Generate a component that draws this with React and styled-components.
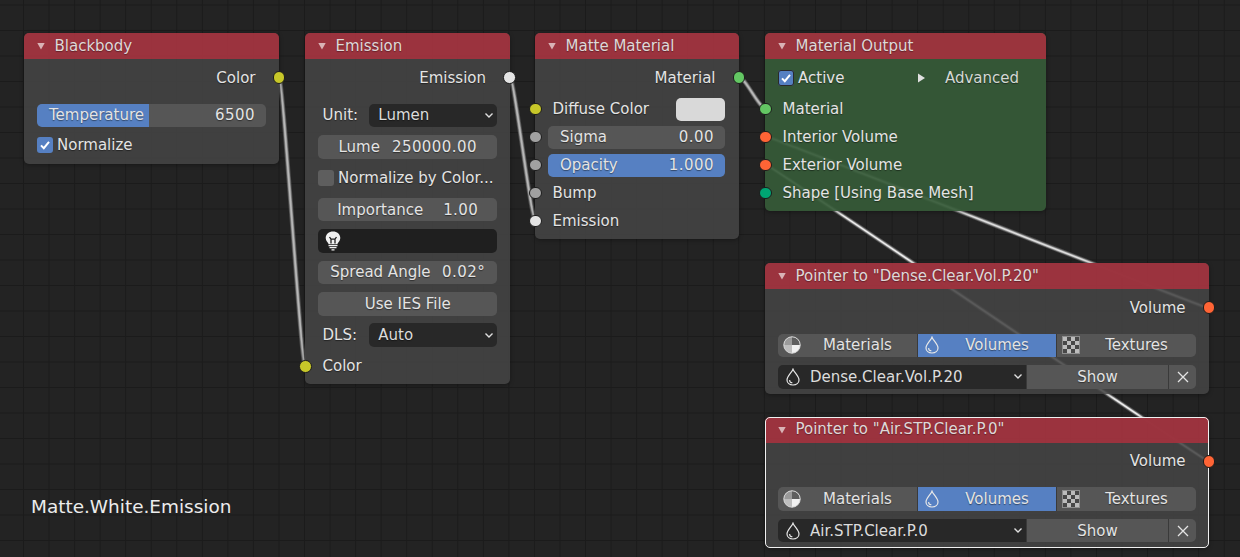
import React from 'react';
import styled, { createGlobalStyle } from 'styled-components';

const GlobalStyle = createGlobalStyle`
  html, body {
    margin: 0;
    padding: 0;
    background: #232323;
  }
  body {
    font-family: "DejaVu Sans", sans-serif;
  }
`;

const Canvas = styled.div`
  position: relative;
  width: 1240px;
  height: 557px;
  overflow: hidden;
  background-color: #232323;
  background-image:
    linear-gradient(to right, #1b1b1b 1px, transparent 1px),
    linear-gradient(to bottom, #1b1b1b 1px, transparent 1px);
  background-size: 25.56px 25.5px;
  background-position: 23px 4.5px;
`;

const Wires = styled.svg`
  position: absolute;
  left: 0;
  top: 0;
`;

const Caption = styled.div`
  position: absolute;
  left: 31px;
  top: 495px;
  font-size: 18.45px;
  line-height: 23px;
  color: #ececec;
`;

const Node = styled.section`
  position: absolute;
  left: ${(p) => p.$x}px;
  top: ${(p) => p.$y}px;
  width: ${(p) => p.$w}px;
  box-sizing: border-box;
  border-radius: 5px;
  background: ${(p) => (p.$output ? 'rgba(54, 90, 56, 0.93)' : 'rgba(68, 68, 68, 0.88)')};
  box-shadow: 0 1px 4px rgba(0, 0, 0, 0.35);
  outline: ${(p) => (p.$selected ? '1px solid #f0f0f0' : 'none')};
  outline-offset: -1px;
  color: #e4e4e4;
  font-size: 15px;
`;

const Header = styled.header`
  display: flex;
  align-items: center;
  height: 25.7px;
  padding-left: 12.5px;
  gap: 10px;
  border-radius: 5px 5px 0 0;
  background: rgba(160, 50, 62, 0.94);
  color: #dfd8d8;
  line-height: 1;
  white-space: nowrap;
  text-shadow: 0 1px 1px rgba(0, 0, 0, 0.35);
`;

const Body = styled.div`
  display: flex;
  flex-direction: column;
  gap: ${(p) => p.$gap}px;
  padding: 7px 13px ${(p) => p.$bottom ?? 6}px;
`;

const Row = styled.div`
  position: relative;
  display: flex;
  align-items: center;
  justify-content: ${(p) => (p.$right ? 'flex-end' : 'flex-start')};
  height: 23.6px;
  margin-bottom: ${(p) => p.$after ?? 0}px;
  padding: ${(p) => (p.$right ? '0 10.5px 0 0' : '0 0 0 4.5px')};
  white-space: nowrap;
  text-shadow: 0 1px 1px rgba(0, 0, 0, 0.45);
`;

const Socket = styled.span`
  position: absolute;
  top: 50%;
  ${(p) => (p.$right ? 'right: -19.3px' : 'left: -19px')};
  width: 10.5px;
  height: 10.5px;
  margin-top: -6.4px;
  border-radius: 50%;
  border: 0.8px solid #1c1c1c;
  background: ${(p) => p.$color};
`;

const Field = styled.div`
  display: flex;
  align-items: center;
  justify-content: ${(p) => (p.$center ? 'center' : 'space-between')};
  gap: ${(p) => p.$gap ?? 0}px;
  height: 23.6px;
  padding: 0 11px 0 12px;
  box-sizing: border-box;
  border-radius: 5px;
  background: ${(p) => (p.$active ? '#5680c2' : '#565656')};
  color: #e4e4e4;
  white-space: nowrap;
  text-shadow: 0 1px 1px rgba(0, 0, 0, 0.45);
`;

const Slider = styled(Field)`
  background: linear-gradient(to right, #5680c2 ${(p) => p.$fill}%, #565656 ${(p) => p.$fill}%);
`;

const Value = styled.span`
  letter-spacing: 0.45px;
`;

const CheckRow = styled.label`
  display: flex;
  align-items: center;
  gap: 4px;
  height: 23.6px;
  margin-top: ${(p) => p.$top ?? 0}px;
  margin-bottom: ${(p) => p.$after ?? 0}px;
  white-space: nowrap;
  text-shadow: 0 1px 1px rgba(0, 0, 0, 0.45);
`;

const Box = styled.span`
  display: flex;
  align-items: center;
  justify-content: center;
  flex: none;
  width: 16px;
  height: 16px;
  border-radius: 3px;
  background: ${(p) => (p.$on ? '#5680c2' : '#5e5e5e')};
  box-shadow: ${(p) => (p.$ring ? 'inset 0 0 0 1px #2a2a2a' : 'none')};
`;

const Advanced = styled.div`
  display: flex;
  align-items: center;
  margin-left: auto;
  padding-right: 14px;
  gap: 20px;
  color: #d4d8d4;
`;

const LabeledRow = styled.div`
  display: grid;
  grid-template-columns: 46.8px 1fr;
  align-items: center;
  padding-left: 4.5px;
  text-shadow: 0 1px 1px rgba(0, 0, 0, 0.45);
`;

const Dropdown = styled.div`
  display: flex;
  align-items: center;
  justify-content: space-between;
  height: 23.6px;
  padding: 0 3px 0 9px;
  box-sizing: border-box;
  border-radius: 5px;
  background: #282828;
  color: #dcdcdc;
  white-space: nowrap;
`;

const BulbField = styled.div`
  display: flex;
  align-items: center;
  height: 23.6px;
  padding-left: 7px;
  box-sizing: border-box;
  border-radius: 5px;
  background: #1f1f1f;
`;

const SwatchRow = styled.div`
  position: relative;
  display: flex;
  align-items: center;
  justify-content: space-between;
  height: 23.6px;
  margin-right: 1px;
  padding-left: 4.5px;
  text-shadow: 0 1px 1px rgba(0, 0, 0, 0.45);
`;

const Swatch = styled.span`
  width: 49px;
  height: 23.6px;
  border-radius: 5px;
  background: #d9d9d9;
`;

const FieldRow = styled.div`
  position: relative;
  margin-right: 1px;
`;

const Tabs = styled.div`
  display: grid;
  grid-template-columns: 139px 139px 140px;
  height: 23.6px;
  margin: 14px 0 8px;
`;

const Tab = styled.div`
  position: relative;
  display: flex;
  align-items: center;
  justify-content: center;
  padding-left: 20px;
  background: ${(p) => (p.$active ? '#5680c2' : '#565656')};
  border-left: ${(p) => (p.$first ? '0' : '1px solid #3a3a3a')};
  border-radius: ${(p) => p.$radius};
  color: #e4e4e4;
  text-shadow: 0 1px 1px rgba(0, 0, 0, 0.45);
`;

const TabIcon = styled.span`
  position: absolute;
  left: ${(p) => p.$left ?? 5}px;
  top: 50%;
  transform: translateY(-50%);
  display: flex;
`;

const PickerRow = styled.div`
  display: grid;
  grid-template-columns: 248px 142px 28px;
  height: 23.6px;
`;

const Picker = styled.div`
  display: flex;
  align-items: center;
  gap: 10px;
  padding-left: 8px;
  padding-right: 3px;
  border-radius: 5px 0 0 5px;
  background: #282828;
  color: #dcdcdc;
  white-space: nowrap;
`;

const PickerName = styled.span`
  flex: 1;
`;

const ShowButton = styled.div`
  display: flex;
  align-items: center;
  justify-content: center;
  background: #565656;
  border-left: 1px solid #3a3a3a;
  color: #e4e4e4;
  text-shadow: 0 1px 1px rgba(0, 0, 0, 0.45);
`;

const CloseButton = styled(ShowButton)`
  border-radius: 0 5px 5px 0;
`;

const SOCKET = {
  yellow: '#c7c729',
  white: '#e4e4e4',
  green: '#63c763',
  grey: '#a1a1a1',
  orange: '#ff6435',
  teal: '#00a673',
};

const Arrow = () => (
  <svg width="8" height="8" viewBox="0 0 8 8">
    <path d="M0.3 1 H7.7 L4 7.6 Z" fill="#d9b3b6" />
  </svg>
);

const Check = () => (
  <svg width="12" height="12" viewBox="0 0 12 12">
    <path d="M2 6.4 L4.8 9.2 L10 2.8" fill="none" stroke="#fff" strokeWidth="2" />
  </svg>
);

const Chevron = () => (
  <svg width="10" height="7" viewBox="0 0 10 7">
    <path d="M1.5 1.5 L5 5 L8.5 1.5" fill="none" stroke="#e0e0e0" strokeWidth="1.4" />
  </svg>
);

const Drop = () => (
  <svg width="14" height="18" viewBox="0 0 14 18">
    <path
      d="M7 1.2 C8.2 4.6 13 8.2 13 12 C13 15 10.4 17 7 17 C3.6 17 1 15 1 12 C1 8.2 5.8 4.6 7 1.2 Z"
      fill="none"
      stroke="#e8e8e8"
      strokeWidth="1.2"
    />
    <path d="M3.6 12 C3.6 13.8 5 14.8 6.4 14.8" fill="none" stroke="#e8e8e8" strokeWidth="1.1" />
  </svg>
);

const Sphere = () => (
  <svg width="18" height="18" viewBox="0 0 18 18">
    <circle cx="9" cy="9" r="8.2" fill="#bdbdbd" />
    <path d="M9 9 V0.8 A8.2 8.2 0 0 0 0.8 9 Z" fill="#9a9a9a" />
    <path d="M9 9 V0.8 A8.2 8.2 0 0 1 17.2 9 Z" fill="#5e5e5e" />
    <path d="M9 9 H17.2 A8.2 8.2 0 0 1 9 17.2 Z" fill="#f0f0f0" />
    <circle cx="9" cy="9" r="8.2" fill="none" stroke="#d8d8d8" strokeWidth="1" />
  </svg>
);

const Checker = () => {
  const cells = [];
  for (let r = 0; r < 4; r++) {
    for (let c = 0; c < 4; c++) {
      cells.push(
        <rect key={`${r}-${c}`} x={1 + c * 4} y={1 + r * 4} width="4" height="4" fill={(r + c) % 2 ? '#484848' : '#bcbcbc'} />
      );
    }
  }
  return (
    <svg width="18" height="18" viewBox="0 0 18 18">
      <rect x="0.5" y="0.5" width="17" height="17" fill="none" stroke="#8e8e8e" />
      {cells}
    </svg>
  );
};

const Bulb = () => (
  <svg width="16" height="20" viewBox="0 0 16 20">
    <path d="M8 0.5 C12 0.5 15.3 3.2 15.3 7 C15.3 10 13 11.2 12.4 13 H3.6 C3 11.2 0.7 10 0.7 7 C0.7 3.2 4 0.5 8 0.5 Z" fill="#f0f0f0" />
    <path d="M4.5 6 L6 8.2 H10 L11.5 6 M6 8.2 V12.6 M10 8.2 V12.6" fill="none" stroke="#1f1f1f" strokeWidth="1.3" />
    <path d="M3.5 14.5 H12.5 M4.5 16.7 H11.5 M6.5 18.9 H9.5" stroke="#f0f0f0" strokeWidth="1.3" />
  </svg>
);

const Cross = () => (
  <svg width="12" height="12" viewBox="0 0 12 12">
    <path d="M1 1 L11 11 M11 1 L1 11" stroke="#e4e4e4" strokeWidth="1.3" />
  </svg>
);

const NodeTitle = ({ children }) => (
  <Header>
    <Arrow />
    <span>{children}</span>
  </Header>
);

const Output = ({ label, color, after }) => (
  <Row $right $after={after}>
    {label}
    <Socket $right $color={color} />
  </Row>
);

const Input = ({ label, color }) => (
  <Row>
    <Socket $color={color} />
    {label}
  </Row>
);

const Pointer = ({ x, y, title, name, selected }) => (
  <Node $x={x} $y={y} $w={444} $selected={selected}>
    <NodeTitle>{title}</NodeTitle>
    <Body $gap={0} $bottom={5.4}>
      <Output label="Volume" color={SOCKET.orange} />
      <Tabs>
        <Tab $first $radius="5px 0 0 5px">
          <TabIcon>
            <Sphere />
          </TabIcon>
          Materials
        </Tab>
        <Tab $active $radius="0">
          <TabIcon $left={7}>
            <Drop />
          </TabIcon>
          Volumes
        </Tab>
        <Tab $radius="0 5px 5px 0">
          <TabIcon>
            <Checker />
          </TabIcon>
          Textures
        </Tab>
      </Tabs>
      <PickerRow>
        <Picker>
          <Drop />
          <PickerName>{name}</PickerName>
          <Chevron />
        </Picker>
        <ShowButton>Show</ShowButton>
        <CloseButton>
          <Cross />
        </CloseButton>
      </PickerRow>
    </Body>
  </Node>
);

const WIRES = [
  { d: 'M279 77 C283 77 301 365 305 365', core: '#b8b8b8' },
  { d: 'M510 77 C514 77 531 219 535 219', core: '#b8b8b8' },
  { d: 'M739 77 C745 77 759 108 765 108', core: '#b8b8b8' },
  { d: 'M1208 308 C1204 308 769 136 765 136', core: '#dcdcdc' },
  { d: 'M1208 461 C1204 461 769 164 765 164', core: '#ececec' },
];

const App = () => (
  <Canvas>
    <GlobalStyle />
    <Wires width="1240" height="557" viewBox="0 0 1240 557">
      {WIRES.map((w) => (
        <g key={w.d} fill="none">
          <path d={w.d} stroke="#6a6a6a" strokeOpacity="0.6" strokeWidth="4.6" />
          <path d={w.d} stroke="#8a8a8a" strokeWidth="3" />
          <path d={w.d} stroke={w.core} strokeWidth="1.6" />
        </g>
      ))}
    </Wires>

    <Node $x={24} $y={33.3} $w={255}>
      <NodeTitle>Blackbody</NodeTitle>
      <Body $gap={0} $bottom={7}>
        <Output label="Color" color={SOCKET.yellow} after={14} />
        <Slider $fill={49}>
          <span>Temperature</span>
          <Value>6500</Value>
        </Slider>
        <CheckRow $top={6.4}>
          <Box $on>
            <Check />
          </Box>
          Normalize
        </CheckRow>
      </Body>
    </Node>

    <Node $x={305} $y={33.3} $w={204.5}>
      <NodeTitle>Emission</NodeTitle>
      <Body $gap={7.8} $bottom={5.4}>
        <Output label="Emission" color={SOCKET.white} after={6.2} />
        <LabeledRow>
          Unit:
          <Dropdown>
            Lumen
            <Chevron />
          </Dropdown>
        </LabeledRow>
        <Field $center $gap={12}>
          <span>Lume</span>
          <Value>250000.00</Value>
        </Field>
        <CheckRow>
          <Box />
          Normalize by Color...
        </CheckRow>
        <Field $center $gap={20}>
          <span>Importance</span>
          <Value>1.00</Value>
        </Field>
        <BulbField>
          <Bulb />
        </BulbField>
        <Field $center $gap={11.5}>
          <span>Spread Angle</span>
          <Value>0.02°</Value>
        </Field>
        <Field $center>Use IES File</Field>
        <LabeledRow>
          DLS:
          <Dropdown>
            Auto
            <Chevron />
          </Dropdown>
        </LabeledRow>
        <Input label="Color" color={SOCKET.yellow} />
      </Body>
    </Node>

    <Node $x={535} $y={33.3} $w={204}>
      <NodeTitle>Matte Material</NodeTitle>
      <Body $gap={4.4} $bottom={6}>
        <Output label="Material" color={SOCKET.green} after={3.6} />
        <SwatchRow>
          <Socket $color={SOCKET.yellow} />
          Diffuse Color
          <Swatch />
        </SwatchRow>
        <FieldRow>
          <Socket $color={SOCKET.grey} />
          <Field>
            <span>Sigma</span>
            <Value>0.00</Value>
          </Field>
        </FieldRow>
        <FieldRow>
          <Socket $color={SOCKET.grey} />
          <Field $active>
            <span>Opacity</span>
            <Value>1.000</Value>
          </Field>
        </FieldRow>
        <Input label="Bump" color={SOCKET.grey} />
        <Input label="Emission" color={SOCKET.white} />
      </Body>
    </Node>

    <Node $x={765} $y={33.3} $w={281} $output>
      <NodeTitle>Material Output</NodeTitle>
      <Body $gap={4.4} $bottom={6}>
        <CheckRow $after={3.6}>
          <Box $on $ring>
            <Check />
          </Box>
          Active
          <Advanced>
            <svg width="7" height="10" viewBox="0 0 7 10">
              <path d="M0 0.5 L7 5 L0 9.5 Z" fill="#e0e0e0" />
            </svg>
            Advanced
          </Advanced>
        </CheckRow>
        <Input label="Material" color={SOCKET.green} />
        <Input label="Interior Volume" color={SOCKET.orange} />
        <Input label="Exterior Volume" color={SOCKET.orange} />
        <Input label="Shape [Using Base Mesh]" color={SOCKET.teal} />
      </Body>
    </Node>

    <Pointer x={765} y={263.3} title={'Pointer to "Dense.Clear.Vol.P.20"'} name="Dense.Clear.Vol.P.20" />
    <Pointer x={765} y={417} title={'Pointer to "Air.STP.Clear.P.0"'} name="Air.STP.Clear.P.0" selected />

    <Caption>Matte.White.Emission</Caption>
  </Canvas>
);

export default App;
